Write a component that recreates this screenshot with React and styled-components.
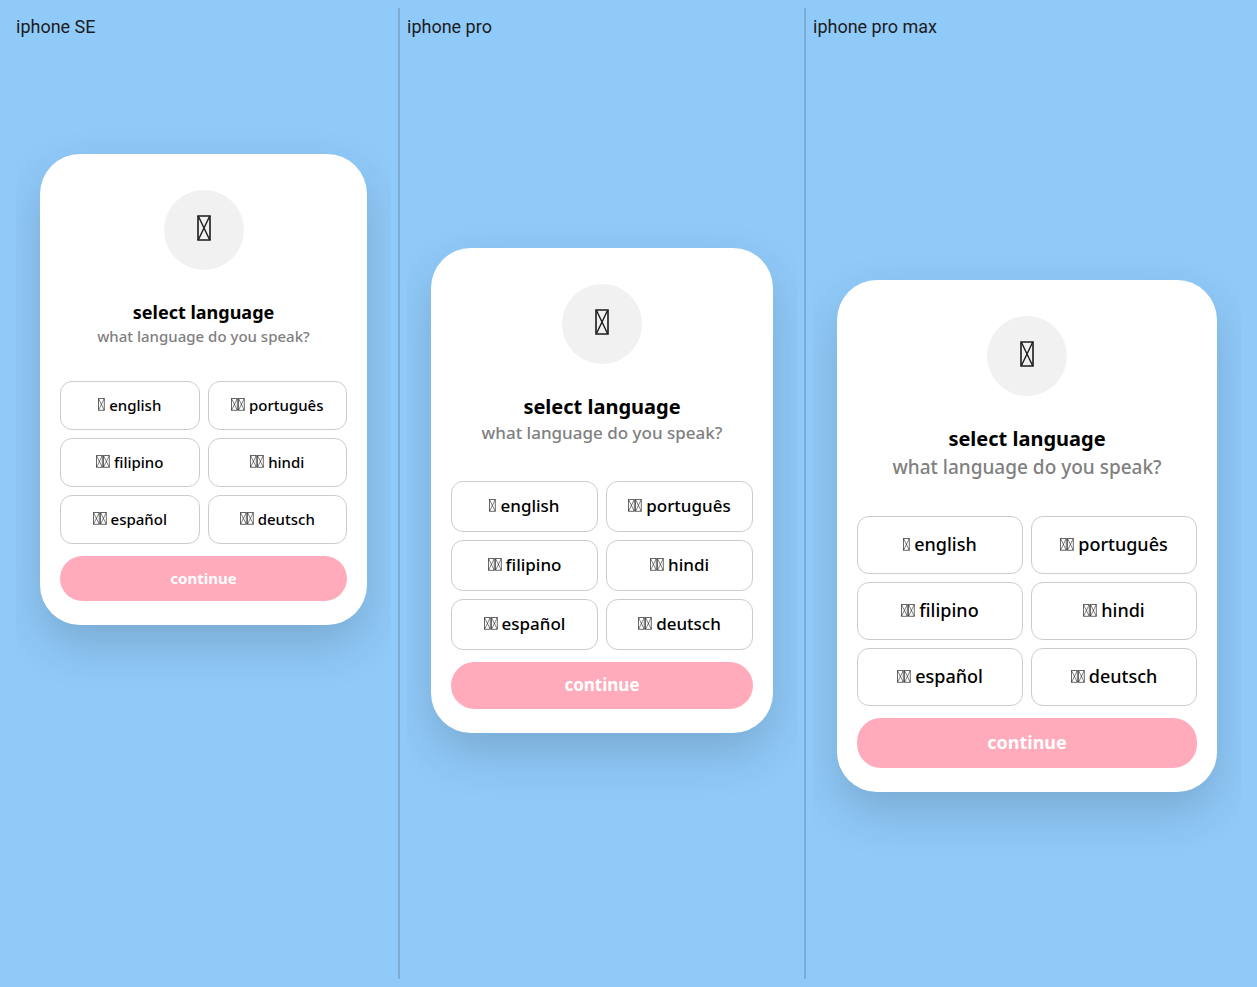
import React from "react";
import styled, { createGlobalStyle, ThemeProvider } from "styled-components";

const GlobalStyle = createGlobalStyle`
  *, *::before, *::after { box-sizing: border-box; }
  body {
    margin: 0;
    min-height: 100vh;
    background: #90caf9;
    color: #1c1c1c;
    font-family: Roboto, sans-serif;
  }
`;

const Page = styled.main`
  display: flex;
  min-height: 100vh;
  padding: 8px;
`;

const Preview = styled.section`
  display: flex;
  flex: ${({ theme }) => theme.share} 1 0;
  flex-direction: column;
  min-width: 0;
  padding: 8px 7px;

  &:first-child { padding-left: 8px; }
  &:last-child { padding-right: 8px; }
  & + & { border-left: 2px solid rgba(0, 0, 0, 0.14); }
`;

const DeviceName = styled.h1`
  margin: 0;
  font-size: 18px;
  font-weight: 400;
  line-height: 22px;
`;

const Screen = styled.div`
  flex: 1;
  overflow: hidden;
  padding: ${({ theme }) => theme.top} 24px 96px;
`;

const Card = styled.div`
  display: flex;
  flex-direction: column;
  align-items: stretch;
  padding: 36px 20px 24px;
  border-radius: 40px;
  background: #fff;
  box-shadow: 0 20px 48px rgba(0, 0, 0, 0.16);
  font-family: "Noto Sans", sans-serif;
`;

const Badge = styled.div`
  display: flex;
  align-items: center;
  justify-content: center;
  align-self: center;
  width: 80px;
  height: 80px;
  padding-bottom: 4px;
  border-radius: 50%;
  background: #f1f1f1;
`;

const Heading = styled.div`
  padding: ${({ theme }) => theme.headingPad};
  text-align: center;
`;

const Title = styled.h2`
  margin: 0;
  color: #000;
  font-size: ${({ theme }) => theme.title};
  font-weight: 700;
  line-height: 24px;
`;

const Subtitle = styled.p`
  margin: 0;
  color: #808080;
  font-size: ${({ theme }) => theme.subtitle};
  font-weight: 500;
  line-height: ${({ theme }) => theme.subtitleLine};
`;

const Options = styled.div`
  display: grid;
  grid-template-columns: 1fr 1fr;
  gap: 8px;
`;

const Option = styled.button`
  display: flex;
  align-items: center;
  justify-content: center;
  gap: 4px;
  height: ${({ theme }) => theme.option};
  padding: 0 0 2px;
  border: 1px solid #ccc;
  border-radius: 12px;
  background: #fff;
  color: #000;
  font-family: inherit;
  font-size: ${({ theme }) => theme.text};
  font-weight: 500;
  white-space: nowrap;
`;

const Flag = styled.span`
  display: flex;
`;

const Continue = styled.button`
  height: ${({ theme }) => theme.action};
  margin-top: 12px;
  padding: 0 0 2px;
  border: 0;
  border-radius: 24px;
  background: #ffabbb;
  color: #fff;
  font-family: inherit;
  font-size: ${({ theme }) => theme.text};
  font-weight: 700;
`;

function LargeBox() {
  return (
    <svg width="14" height="26" viewBox="0 0 14 26" fill="none" stroke="#1c1c1c" aria-hidden="true">
      <path d="M1 1H13V25H1Z" strokeWidth="1.6" />
      <path d="M1.5 1.5L12.5 24.5M12.5 1.5L1.5 24.5" strokeWidth="1.4" />
    </svg>
  );
}

function SmallBox() {
  return (
    <svg width="7" height="13" viewBox="0 0 7 13" fill="none" stroke="#000" aria-hidden="true">
      <path d="M0.5 0.5H6.3V12.3H0.5Z" strokeWidth="0.6" />
      <path d="M0.5 0.5L6.3 12.3M6.3 0.5L0.5 12.3" strokeWidth="0.5" />
    </svg>
  );
}

const languages = [
  { label: "english", boxes: 1 },
  { label: "português", boxes: 2 },
  { label: "filipino", boxes: 2 },
  { label: "hindi", boxes: 2 },
  { label: "español", boxes: 2 },
  { label: "deutsch", boxes: 2 },
];

const devices = [
  {
    name: "iphone SE", share: 375, top: "116px", headingPad: "30px 0 33px",
    title: "18px", subtitle: "15px", subtitleLine: "24px",
    option: "49px", action: "45px", text: "15px",
  },
  {
    name: "iphone pro", share: 390, top: "210px", headingPad: "31px 0 34px",
    title: "20px", subtitle: "17px", subtitleLine: "28px",
    option: "51px", action: "47px", text: "17px",
  },
  {
    name: "iphone pro max", share: 428, top: "242px", headingPad: "31px 0 33px",
    title: "20px", subtitle: "19px", subtitleLine: "32px",
    option: "58px", action: "50px", text: "18px",
  },
];

export default function App() {
  return (
    <Page>
      <GlobalStyle />
      {devices.map((device) => (
        <ThemeProvider key={device.name} theme={device}>
          <Preview>
            <DeviceName>{device.name}</DeviceName>
            <Screen>
              <Card>
                <Badge><LargeBox /></Badge>
                <Heading>
                  <Title>select language</Title>
                  <Subtitle>what language do you speak?</Subtitle>
                </Heading>
                <Options>
                  {languages.map(({ label, boxes }) => (
                    <Option key={label} type="button">
                      <Flag>
                        <SmallBox />
                        {boxes > 1 && <SmallBox />}
                      </Flag>
                      {label}
                    </Option>
                  ))}
                </Options>
                <Continue type="button">continue</Continue>
              </Card>
            </Screen>
          </Preview>
        </ThemeProvider>
      ))}
    </Page>
  );
}
